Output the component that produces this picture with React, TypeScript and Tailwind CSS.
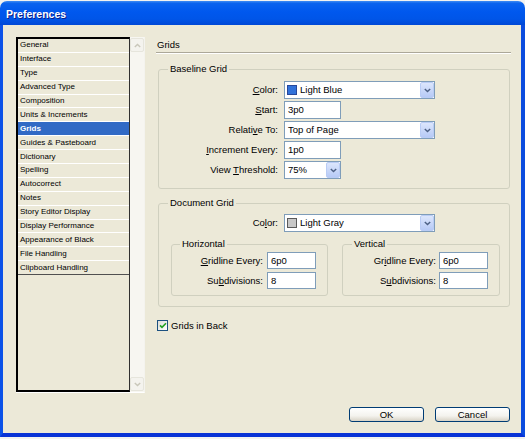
import React from "react";

const FONT = "font-['Liberation_Sans',Arial,sans-serif]";

function Chevron({ color = "#4D6185" }: { color?: string }) {
  return (
    <svg width="7" height="5" viewBox="0 0 7 5">
      <path d="M0.8 0.9 L3.5 3.6 L6.2 0.9" fill="none" stroke={color} strokeWidth="1.4" />
    </svg>
  );
}

function Combo({ w, children }: { w: string; children: React.ReactNode }) {
  return (
    <div className={`${w} h-[18px] border border-[#7F9DB9] bg-white flex items-center`}>
      <div className="flex-1 flex items-center gap-[3px] pl-[2px] text-[9.5px] leading-none text-black">{children}</div>
      <div className="w-[14px] h-[16px] rounded-[2px] border border-[#B9CCF5] bg-[linear-gradient(to_bottom,#DCE6FC,#B7CAF6)] flex items-center justify-center">
        <Chevron />
      </div>
    </div>
  );
}

function Field({ w, h = "h-[18px]", value }: { w: string; h?: string; value: string }) {
  return (
    <div className={`${w} ${h} border border-[#7F9DB9] bg-white flex items-center pl-[3px] text-[9.5px] leading-none text-black`}>
      {value}
    </div>
  );
}

function Label({ children, h = "h-[18px]" }: { children: React.ReactNode; h?: string }) {
  return (
    <div className={`${h} flex items-center justify-end text-[9.5px] leading-none text-black whitespace-nowrap`}>
      <span>{children}</span>
    </div>
  );
}

const U = ({ children }: { children: React.ReactNode }) => (
  <span className="underline underline-offset-[1px] decoration-[1px]">{children}</span>
);

const items = [
  "General",
  "Interface",
  "Type",
  "Advanced Type",
  "Composition",
  "Units & Increments",
  "Grids",
  "Guides & Pasteboard",
  "Dictionary",
  "Spelling",
  "Autocorrect",
  "Notes",
  "Story Editor Display",
  "Display Performance",
  "Appearance of Black",
  "File Handling",
  "Clipboard Handling",
];

function ScrollBtn({ up }: { up?: boolean }) {
  return (
    <div className="w-[14px] h-[14px] rounded-[2px] border border-[#E6E5DC] bg-[#F4F3EE] flex items-center justify-center">
      <div className={up ? "rotate-180" : ""}>
        <Chevron color="#C9C7BA" />
      </div>
    </div>
  );
}

export default function App() {
  return (
    <div className={`w-[525px] h-[439px] bg-[#F2F2F0] overflow-hidden ${FONT}`}>
      <div className="mt-[1px] w-[525px] h-[436px] flex flex-col rounded-t-[7px] overflow-hidden">
        {/* Title bar */}
        <div className="h-[24px] shrink-0 flex items-center px-[6px] pt-[2px] bg-[linear-gradient(to_bottom,#3F8CF3_0%,#0B63EE_10%,#0058EE_45%,#0055E8_75%,#0048D6_100%)]">
          <span className="text-white font-bold text-[10.5px] leading-none [text-shadow:1px_1px_0_#0A1E8A]">Preferences</span>
        </div>
        {/* Client */}
        <div className="flex-1 flex flex-col bg-[#ECE9D8] border-l-[3px] border-r-[4px] border-b-[4px] border-l-[#0B52E8] border-r-[#0B4CDE] border-b-[#0832D6] pl-[13px] pr-[10px] pt-[12px] pb-[11px]">
          <div className="h-[356px] flex">
            {/* List */}
            <div className="w-[129px] h-full flex border-r border-b border-r-[#F4F3EE] border-b-[#FFFFFF]">
              <div className="w-[114px] h-full border-l-2 border-t-2 border-b-2 border-r border-l-black border-t-black border-b-black border-r-[#303030] flex flex-col">
                {items.map((it, i) => {
                  const sel = it === "Grids";
                  const last = i === items.length - 1;
                  return (
                    <div
                      key={it}
                      className={`h-[13.9px] shrink-0 flex items-center pl-[2px] text-[8px] leading-none border-b ${
                        last ? "border-b-[#505050]" : "border-b-white"
                      } ${sel ? "bg-[#316AC5] text-white font-bold" : "text-black"}`}
                    >
                      {it}
                    </div>
                  );
                })}
              </div>
              <div className="flex-1 h-full bg-[#F7F6F1] flex flex-col justify-between pt-[1px] pb-[1px]">
                <ScrollBtn up />
                <ScrollBtn />
              </div>
            </div>

            {/* Right panel */}
            <div className="flex-1 ml-[11px] flex flex-col">
              <div className="mt-[2px] pl-[1px] h-[12px] flex items-center text-[9.5px] leading-none text-black">Grids</div>
              <div className="mt-[1px] h-[2px] border-t border-t-[#ACA899] border-b border-b-white" />

              {/* Baseline Grid */}
              <fieldset className="mt-[9px] ml-[2px] mr-[1px] border border-[#D0D0BF] rounded-[3px] pt-[6px] pb-[9px]">
                <legend className="ml-[9px] px-[2px] h-[12px] text-[9.5px] leading-[12px] text-black">Baseline Grid</legend>
                <div className="grid grid-cols-[119px_auto] gap-x-[6px] gap-y-[2px]">
                  <Label>
                    <U>C</U>olor:
                  </Label>
                  <Combo w="w-[151px]">
                    <span className="w-[10px] h-[10px] border border-[#27489A] bg-[#5C9DF4] bg-[radial-gradient(#2F6FD8_0.7px,transparent_0.8px)] bg-[length:2px_2px]" />
                    <span>Light Blue</span>
                  </Combo>
                  <Label>
                    <U>S</U>tart:
                  </Label>
                  <Field w="w-[57px]" value="3p0" />
                  <Label>
                    Relati<U>v</U>e To:
                  </Label>
                  <Combo w="w-[151px]">
                    <span className="pl-[1px]">Top of Page</span>
                  </Combo>
                  <Label>
                    <U>I</U>ncrement Every:
                  </Label>
                  <Field w="w-[57px]" value="1p0" />
                  <Label>
                    {"View "}
                    <U>T</U>hreshold:
                  </Label>
                  <Combo w="w-[57px]">
                    <span className="pl-[1px]">75%</span>
                  </Combo>
                </div>
              </fieldset>

              {/* Document Grid */}
              <fieldset className="mt-[8px] ml-[2px] mr-[1px] border border-[#D0D0BF] rounded-[3px] pt-[5px] pb-[10px] pl-[12px]">
                <legend className="ml-[-3px] px-[2px] h-[12px] text-[9.5px] leading-[12px] text-black">Document Grid</legend>
                <div className="flex -ml-[12px]">
                  <div className="w-[119px]">
                    <Label>
                      Co<U>l</U>or:
                    </Label>
                  </div>
                  <div className="ml-[6px]">
                    <Combo w="w-[151px]">
                      <span className="w-[10px] h-[10px] border border-[#5A5A5A] bg-[#C8C8C8]" />
                      <span>Light Gray</span>
                    </Combo>
                  </div>
                </div>
                <div className="mt-[6px] flex gap-[14px]">
                  <fieldset className="w-[157px] border border-[#D0D0BF] rounded-[3px] pt-[2px] pb-[6px]">
                    <legend className="ml-[8px] px-[2px] h-[12px] text-[9.5px] leading-[12px] text-black">Horizontal</legend>
                    <div className="grid grid-cols-[91px_49px] gap-x-[4px] gap-y-[3px]">
                      <Label h="h-[17px]">
                        <U>G</U>ridline Every:
                      </Label>
                      <Field w="w-[49px]" h="h-[17px]" value="6p0" />
                      <Label h="h-[17px]">
                        Su<U>b</U>divisions:
                      </Label>
                      <Field w="w-[49px]" h="h-[17px]" value="8" />
                    </div>
                  </fieldset>
                  <fieldset className="w-[158px] border border-[#D0D0BF] rounded-[3px] pt-[2px] pb-[6px]">
                    <legend className="ml-[9px] px-[2px] h-[12px] text-[9.5px] leading-[12px] text-black">Vertical</legend>
                    <div className="grid grid-cols-[93px_49px] gap-x-[3px] gap-y-[3px]">
                      <Label h="h-[17px]">
                        Gr<U>i</U>dline Every:
                      </Label>
                      <Field w="w-[49px]" h="h-[17px]" value="6p0" />
                      <Label h="h-[17px]">
                        S<U>u</U>bdivisions:
                      </Label>
                      <Field w="w-[49px]" h="h-[17px]" value="8" />
                    </div>
                  </fieldset>
                </div>
              </fieldset>

              {/* Checkbox */}
              <div className="mt-[13px] ml-[1px] flex items-center gap-[3px]">
                <div className="w-[11px] h-[11px] border border-[#1C5180] bg-[linear-gradient(135deg,#DCDCD7,#FFFFFF)] flex items-center justify-center">
                  <svg width="8" height="7" viewBox="0 0 8 7">
                    <path d="M1 3.4 L3 5.4 L7 1.2" fill="none" stroke="#21A121" strokeWidth="1.6" />
                  </svg>
                </div>
                <span className="text-[9.5px] leading-none text-black">Grids in Back</span>
              </div>
            </div>
          </div>

          {/* Buttons */}
          <div className="mt-[14px] flex justify-end gap-[11px] pr-[1px]">
            <button className="w-[75px] h-[15px] rounded-[3px] border border-[#003C74] bg-[linear-gradient(to_bottom,#FFFFFF_0%,#F4F3EE_60%,#D8D3C6_100%)] text-[9.5px] leading-none text-black flex items-center justify-center">
              OK
            </button>
            <button className="w-[75px] h-[15px] rounded-[3px] border border-[#003C74] bg-[linear-gradient(to_bottom,#FFFFFF_0%,#F4F3EE_60%,#D8D3C6_100%)] text-[9.5px] leading-none text-black flex items-center justify-center">
              Cancel
            </button>
          </div>
        </div>
      </div>
    </div>
  );
}
